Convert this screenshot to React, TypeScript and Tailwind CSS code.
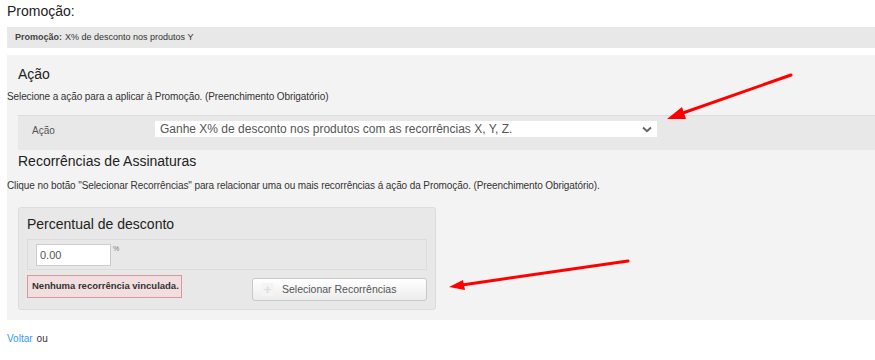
import React from "react";

function Arrows() {
  return (
    <svg className="absolute inset-0 pointer-events-none" width={875} height={360}>
      {/* top arrow pointing at the select */}
      <line x1={791} y1={75} x2={680} y2={114} stroke="#ff0000" strokeWidth={3} strokeLinecap="round" />
      <polygon points="667,119 682,107 686,119" fill="#ff0000" />
      {/* bottom arrow pointing at the button */}
      <line x1={628} y1={261} x2={462} y2={285} stroke="#ff0000" strokeWidth={3} strokeLinecap="round" />
      <polygon points="449,287 463,280 465,290" fill="#ff0000" />
    </svg>
  );
}

export default function App() {
  return (
    <div
      className="relative w-[875px] h-[360px] bg-white text-[#222] overflow-hidden"
      style={{ fontFamily: '"Liberation Sans", Arial, sans-serif' }}
    >
      {/* Page title */}
      <div className="pl-[7px] pt-[2px] text-[14px] leading-[18px]">Promoção:</div>

      {/* Summary bar */}
      <div className="ml-[7px] mt-[7px] h-[21px] bg-[#e8e8e8] flex items-center px-[8px] text-[9px] text-[#333]">
        <span className="font-bold text-[#444]">Promoção:</span>
        <span className="ml-[3px]">X% de desconto nos produtos Y</span>
      </div>

      {/* Main panel */}
      <div className="ml-[7px] mt-[7px] h-[265px] bg-[#f3f3f3] pt-[11px]">
        <div className="pl-[11px] text-[14px] leading-[16px] text-[#222]">Ação</div>
        <div className="mt-[9px] text-[10px] leading-[12px] text-[#333] tracking-[-0.1px]">
          Selecione a ação para a aplicar à Promoção. (Preenchimento Obrigatório)
        </div>

        {/* Ação row */}
        <div className="ml-[11px] mt-[12px] h-[35px] bg-[#e8e8e8] border-t border-[#dcdcdc] flex items-start">
          <div className="w-[137px] pl-[14px] pt-[9px] text-[10px] leading-[12px] text-[#555]">Ação</div>
          <div className="mt-[5px] w-[502px] h-[16px] bg-white flex items-center justify-between pl-[5px] pr-[5px] text-[12px] text-[#555]">
            <span>Ganhe X% de desconto nos produtos com as recorrências X, Y, Z.</span>
            <svg width={10} height={7} viewBox="0 0 10 7">
              <path d="M1 1.5 L5 5.2 L9 1.5" fill="none" stroke="#666" strokeWidth={2} />
            </svg>
          </div>
        </div>

        <div className="pl-[11px] mt-[3px] text-[14px] leading-[16px] text-[#222]">Recorrências de Assinaturas</div>
        <div className="mt-[11px] text-[10px] leading-[12px] text-[#333] tracking-[-0.1px]">
          Clique no botão "Selecionar Recorrências" para relacionar uma ou mais recorrências á ação da Promoção. (Preenchimento Obrigatório).
        </div>

        {/* Discount box */}
        <div className="ml-[11px] mt-[15px] w-[418px] h-[103px] bg-[#e8e8e8] border border-[#dcdcdc] rounded-[3px] px-[8px] pt-[8px]">
          <div className="text-[14px] leading-[16px] text-[#222]">Percentual de desconto</div>
          <div className="mt-[7px] h-[31px] border border-[#dcdcdc] flex items-start pl-[8px] pt-[4px]">
            <div className="w-[75px] h-[22px] bg-white border border-[#ccc] flex items-center pl-[3px] text-[11px] text-[#555]">
              0.00
            </div>
            <span className="ml-[2px] text-[7px] text-[#777] leading-[10px]">%</span>
          </div>
          <div className="mt-[5px] flex items-start justify-between">
            <div className="h-[23px] pl-[4px] pr-[2px] bg-[#f2dede] border border-[#d69a9a] flex items-center text-[9.5px] font-bold text-[#333]">
              Nenhuma recorrência vinculada.
            </div>
            <button className="mt-[3px] w-[175px] h-[23px] rounded-[3px] border border-[#c8c8c8] bg-gradient-to-b from-white to-[#ececec] flex items-center pl-[8px] text-[10.5px] text-[#555]">
              <span className="w-[13px] h-[13px] bg-[#f4f4f4] rounded-[2px] flex items-center justify-center text-[#ddd] text-[13px] leading-none font-bold">
                +
              </span>
              <span className="ml-[8px]">Selecionar Recorrências</span>
            </button>
          </div>
        </div>
      </div>

      {/* Footer */}
      <div className="pl-[7px] mt-[13px] text-[10px] leading-[12px]">
        <a className="text-[#3399ff]" href="#">Voltar</a>
        <span className="ml-[4px] text-[#333]">ou</span>
      </div>

      <Arrows />
    </div>
  );
}
